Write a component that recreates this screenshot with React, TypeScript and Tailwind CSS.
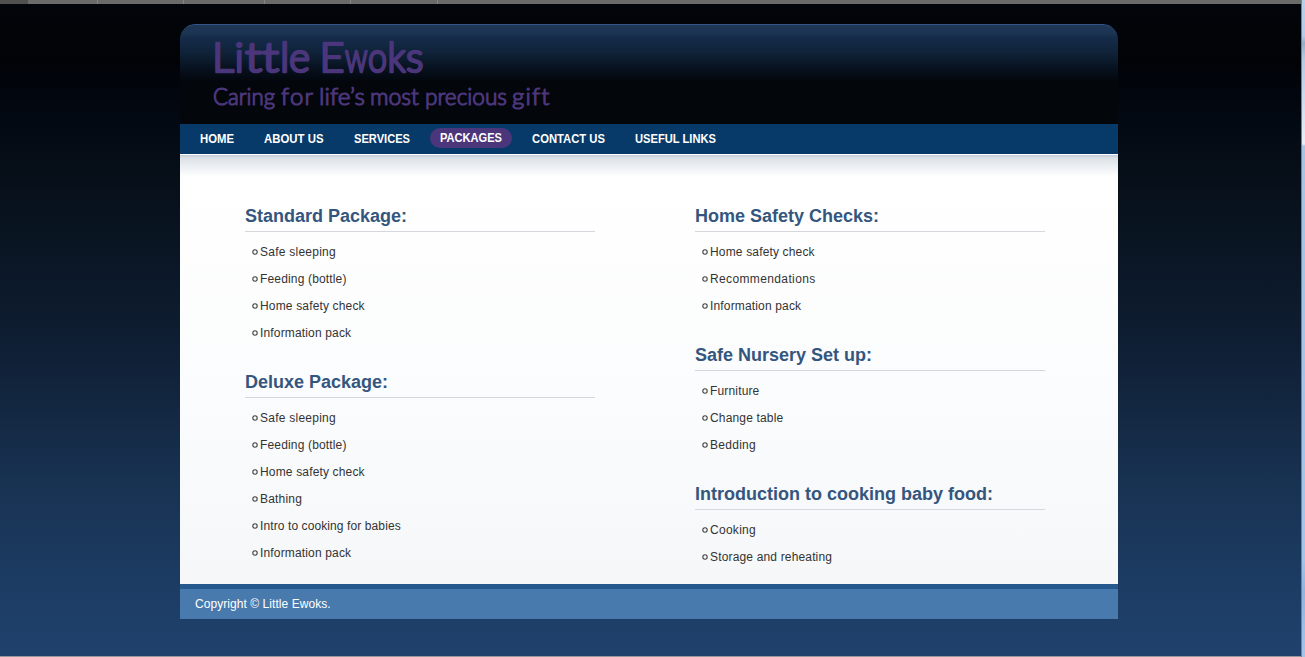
const nav = [
  { label: 'HOME', box: 'w-[54px]', width: 34 },
  { label: 'ABOUT US', box: 'w-[80px]', width: 59.5 },
  { label: 'SERVICES', box: 'w-[76px]', width: 56 },
  { label: 'PACKAGES', box: 'w-[82px]', width: 62 },
  { label: 'CONTACT US', box: 'w-[93px]', width: 73 },
  { label: 'USEFUL LINKS', box: 'w-[101px]', width: 81 },
];

const left = [
  { title: 'Standard Package:', items: ['Safe sleeping', 'Feeding (bottle)', 'Home safety check', 'Information pack'] },
  {
    title: 'Deluxe Package:',
    items: ['Safe sleeping', 'Feeding (bottle)', 'Home safety check', 'Bathing', 'Intro to cooking for babies', 'Information pack'],
  },
];

const right = [
  { title: 'Home Safety Checks:', items: ['Home safety check', 'Recommendations', 'Information pack'] },
  { title: 'Safe Nursery Set up:', items: ['Furniture', 'Change table', 'Bedding'] },
  { title: 'Introduction to cooking baby food:', items: ['Cooking', 'Storage and reheating'] },
];

const tracking: Record<string, string> = {
  'Safe sleeping': 'tracking-[0.25px]',
  Recommendations: 'tracking-[0.37px]',
  Cooking: 'tracking-[0.28px]',
  Bedding: 'tracking-[0.28px]',
  Bathing: 'tracking-[0.2px]',
  'Intro to cooking for babies': 'tracking-[0.1px]',
};

function Column({ sections }: { sections: typeof left }) {
  return (
    <div className="w-[350px]">
      {sections.map((s) => (
        <section key={s.title} className="mb-[23px]">
          <h2 className="h-[28px] whitespace-nowrap border-b border-[#d5d7dc] pt-px text-[18px] font-bold leading-[22px] text-[#34567e]">
            {s.title}
          </h2>
          <ul className="pt-[7px]">
            {s.items.map((item) => (
              <li
                key={item}
                className={`flex h-[27px] items-center pl-[7px] text-[12px] leading-[27px] text-[#333] ${tracking[item] ?? 'tracking-[0.16px]'}`}
              >
                <svg className="mb-[2px] mr-[2px] h-[6px] w-[6px] shrink-0" viewBox="0 0 6 6">
                  <circle cx="3" cy="3" r="2.2" fill="none" stroke="#444" strokeWidth="1.1" />
                </svg>
                {item}
              </li>
            ))}
          </ul>
        </section>
      ))}
    </div>
  );
}

function Logo() {
  return (
    <svg
      className="block h-[100px] w-[400px]"
      viewBox="0 0 400 100"
      fill="#4b367c"
      stroke="#4b367c"
      strokeLinejoin="round"
      strokeLinecap="round"
      fontFamily='"Comic Sans MS", Lato, sans-serif'
      fontWeight="300"
    >
      <text y="47" fontSize="42" strokeWidth="2.7">
        <tspan x="32" textLength="22" lengthAdjust="spacingAndGlyphs">L</tspan>
        <tspan x="54.5">i</tspan>
        <tspan x="65" textLength="17" lengthAdjust="spacingAndGlyphs">t</tspan>
        <tspan x="82" textLength="17" lengthAdjust="spacingAndGlyphs">t</tspan>
        <tspan x="100">l</tspan>
        <tspan x="109" textLength="21" lengthAdjust="spacingAndGlyphs">e</tspan>
        <tspan> </tspan>
        <tspan x="139.5" textLength="25" lengthAdjust="spacingAndGlyphs">E</tspan>
        <tspan x="165" textLength="22.5" lengthAdjust="spacingAndGlyphs">w</tspan>
        <tspan x="188" textLength="19" lengthAdjust="spacingAndGlyphs">o</tspan>
        <tspan x="207.5" textLength="18" lengthAdjust="spacingAndGlyphs">k</tspan>
        <tspan x="226" textLength="17.5" lengthAdjust="spacingAndGlyphs">s</tspan>
      </text>
      <g fontSize="24" strokeWidth="1.2" className="[font-variant-ligatures:none]">
        <text x="33" y="79.5" textLength="62" lengthAdjust="spacingAndGlyphs">Caring</text>
        <text x="101" y="79.5" textLength="32" lengthAdjust="spacing">for</text>
        <text x="139" y="79.5" textLength="46" lengthAdjust="spacingAndGlyphs">life’s</text>
        <text x="190" y="79.5" textLength="49" lengthAdjust="spacingAndGlyphs">most</text>
        <text x="245" y="79.5" textLength="82" lengthAdjust="spacingAndGlyphs">precious</text>
        <text x="332" y="79.5" textLength="37.5" lengthAdjust="spacing">gift</text>
      </g>
    </svg>
  );
}

export default function App() {
  return (
    <div className="flex h-[657px] w-[1305px] overflow-hidden font-['Liberation_Sans',Arial,sans-serif]">
      <div className="flex w-[1301px] flex-col">
        <div className="flex h-[4px] shrink-0 bg-[#6b6b6b]">
          <div className="w-[28px] bg-[#515151]" />
          <div className="w-[70px] border-r border-[#858585]" />
          <div className="w-[86px] border-r border-[#858585]" />
          <div className="w-[81px] border-r border-[#858585]" />
          <div className="w-[86px] border-r border-[#858585]" />
          <div className="w-[87px] border-r border-[#858585]" />
        </div>
        <div className="flex-1 bg-[linear-gradient(180deg,#020509_0px,#010307_60px,#020710_100px,#07101a_180px,#0e1d31_330px,#183252_480px,#1d3d65_590px,#1f416c_652px)] pl-[180px] pt-[20px]">
          <div className="flex h-[595px] w-[938px] flex-col">
            <header className="h-[100px] overflow-hidden rounded-t-[15px] bg-[#03060a]">
              <div className="h-full rounded-t-[15px] border-t border-[#315489] bg-[linear-gradient(180deg,#203556_0px,#1c3553_8px,#142b49_13px,#0f2238_28px,#07111e_44px,#03060b_57px)]">
                <Logo />
              </div>
            </header>
            <nav className="flex h-[30px] gap-[10px] bg-[#083a69] pl-[10px] pt-[4px] text-[12px] font-bold leading-[20px] text-white">
              {nav.map((n) => (
                <a
                  key={n.label}
                  className={
                    n.label === 'PACKAGES'
                      ? `${n.box} h-[20px] rounded-full bg-[#4b367c] px-[10px]`
                      : `${n.box} h-[20px] px-[10px] pt-px`
                  }
                >
                  <svg className="block h-[20px] w-full overflow-visible" fill="white">
                    <text x="0" y="14" textLength={n.width} lengthAdjust="spacingAndGlyphs">
                      {n.label}
                    </text>
                  </svg>
                </a>
              ))}
            </nav>
            <main className="flex h-[430px] shrink-0 gap-[100px] border-t border-white bg-[linear-gradient(180deg,#c2cbd8_0px,#dbe1e7_3px,#e9edf1_10px,#fff0_22px),linear-gradient(180deg,#fff_0px,#fefefe_80px,#fbfcfd_230px,#f5f7f9_430px)] pl-[65px] pt-[49px]">
              <Column sections={left} />
              <Column sections={right} />
            </main>
            <footer className="h-[35px] border-t-[5px] border-[#26598d] bg-[#497aad] pl-[15px] text-[12px] leading-[30px] tracking-[0.06px] text-white">
              Copyright © Little Ewoks.
            </footer>
          </div>
        </div>
        <div className="h-px shrink-0 bg-[#98989c]" />
      </div>
      <div className="w-[4px] border-l border-[#788391] bg-[linear-gradient(180deg,#b4d1f0_0px,#b0cdec_36px,#92aecb_43px,#b1cbe7_58px,#e8eff8_144px,#a4c5e8_146px,#a4c5e8_560px,#91b5df_590px,#a4c5e8_657px)]" />
    </div>
  );
}
